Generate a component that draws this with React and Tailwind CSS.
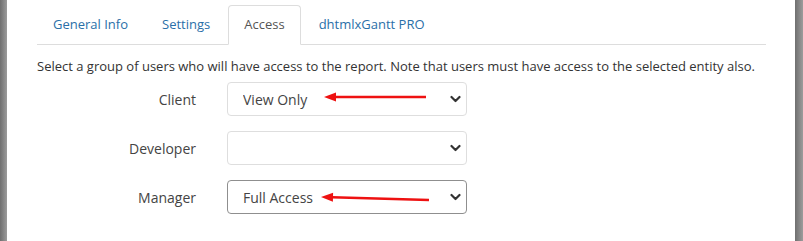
import { useState } from "react";

const tabs = ["General Info", "Settings", "Access", "dhtmlxGantt PRO"];

function Chevron() {
  return (
    <svg
      className="pointer-events-none absolute right-[6px] top-1/2 -translate-y-1/2"
      width="11"
      height="8"
      viewBox="0 0 11 8"
      fill="none"
    >
      <path d="M1.5 2 L5.5 6 L9.5 2" stroke="#333" strokeWidth="2.2" strokeLinecap="round" strokeLinejoin="round" />
    </svg>
  );
}

function Arrow({ x1, y1, x2, y2 }) {
  // tip at (x1, y1), tail at (x2, y2)
  const ang = Math.atan2(y2 - y1, x2 - x1);
  const len = 12;
  const half = 4.5;
  const bx = x1 + Math.cos(ang) * len;
  const by = y1 + Math.sin(ang) * len;
  const px = -Math.sin(ang) * half;
  const py = Math.cos(ang) * half;
  return (
    <svg className="pointer-events-none absolute left-0 top-0" width="240" height="34">
      <line x1={bx - Math.cos(ang)} y1={by - Math.sin(ang)} x2={x2} y2={y2} stroke="#ee1111" strokeWidth="2.5" />
      <polygon points={`${x1},${y1} ${bx + px},${by + py} ${bx - px},${by - py}`} fill="#ee1111" />
    </svg>
  );
}

function Field({ label, value, options, focused, arrow }) {
  const [val, setVal] = useState(value);
  return (
    <div className="flex items-center">
      <label className="w-[159px] text-right text-[14px] text-[#444]">{label}</label>
      <div className="relative ml-[31px] w-[240px] h-[34px]">
        <select
          value={val}
          onChange={(e) => setVal(e.target.value)}
          className={`h-full w-full appearance-none rounded-[4px] border bg-white pl-[15px] pr-6 text-[14px] text-[#444] outline-none ${
            focused ? "border-[#8f8f8f]" : "border-[#dedede]"
          }`}
          style={{ fontFamily: "'Open Sans', sans-serif" }}
        >
          {options.map((o) => (
            <option key={o} value={o}>
              {o}
            </option>
          ))}
        </select>
        <Chevron />
        {arrow && <Arrow {...arrow} />}
      </div>
    </div>
  );
}

export default function App() {
  const [active, setActive] = useState("Access");
  const opts = ["", "View Only", "Full Access"];

  return (
    <div className="flex h-[241px] w-[803px] bg-white font-['Open_Sans',sans-serif]">
      <div className="w-[7px] bg-gradient-to-r from-[#6f6f6f] to-[#9c9c9c]" />

      <div className="flex-1 pl-[30px] pr-[29px]">
        <ul className="mt-[5px] flex gap-[2px] border-b border-[#dddddd]">
          {tabs.map((t) => (
            <li key={t} className="-mb-px">
              <button
                onClick={() => setActive(t)}
                className={`h-[40px] rounded-t-[4px] border px-[15px] text-[13px] ${
                  active === t
                    ? "border-[#dddddd] border-b-white bg-white text-[#555]"
                    : "border-transparent text-[#2a6fa8]"
                }`}
              >
                {t}
              </button>
            </li>
          ))}
        </ul>

        <p className="mt-[12px] text-[13px] leading-[18px] text-[#333]">
          Select a group of users who will have access to the report. Note that users must have access to the selected entity also.
        </p>

        <div className="mt-[7px] flex flex-col gap-[15px]">
          <Field label="Client" value="View Only" options={opts} arrow={{ x1: 97, y1: 15, x2: 199, y2: 15 }} />
          <Field label="Developer" value="" options={opts} />
          <Field label="Manager" value="Full Access" options={opts} focused arrow={{ x1: 94, y1: 17, x2: 202, y2: 20 }} />
        </div>
      </div>

      <div className="w-[8px] bg-gradient-to-r from-[#6f6f6f] to-[#9c9c9c]" />
    </div>
  );
}
